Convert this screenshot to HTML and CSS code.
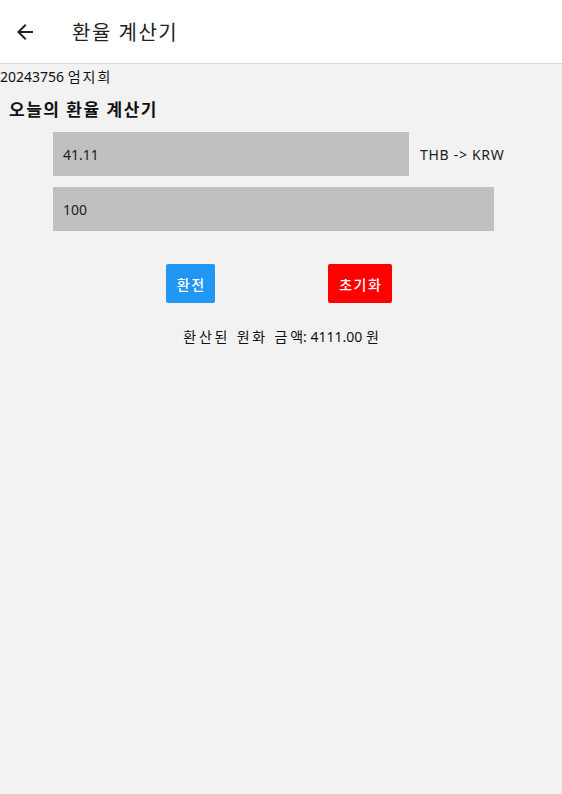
FILE: index.html
```html
<!DOCTYPE html>
<html lang="ko">
<head>
<meta charset="utf-8">
<link rel="stylesheet" href="styles.css">
</head>
<body>
<header class="appbar">
  <svg class="back" width="24" height="24" viewBox="0 0 24 24"><path d="M20 11H7.83l5.59-5.59L12 4l-8 8 8 8 1.41-1.41L7.83 13H20v-2z" fill="#222"/></svg>
  <span class="title">환율 계산기</span>
</header>
<main class="content">
  <div class="student">20243756 <span class="ko">엄지희</span></div>
  <h1 class="heading">오늘의 환율 계산기</h1>
  <div class="row">
    <div class="field field-rate">41.11</div>
    <span class="pair">THB -&gt; KRW</span>
  </div>
  <div class="row">
    <div class="field field-amount">100</div>
  </div>
  <div class="buttons">
    <button class="btn btn-blue">환전</button>
    <button class="btn btn-red">초기화</button>
  </div>
  <p class="result"><span class="ko ko-wide">환산된 원화 금</span>액: 4111.00 <span class="ko">원</span></p>
</main>
</body>
</html>
```
FILE: styles.css
```css
html, body { margin: 0; padding: 0; }
body {
  background: #f2f2f2;
  font-family: "Noto Sans", "Noto Sans CJK KR", sans-serif;
  color: #111;
  width: 562px;
  height: 794px;
  overflow: hidden;
}
.appbar {
  height: 64px;
  background: #fff;
  border-bottom: 1px solid #d8d8d8;
  display: flex;
  align-items: center;
  padding-left: 13px;
  box-sizing: border-box;
}
.back { margin-right: 35px; }
.title { font-size: 20px; color: #222; letter-spacing: 1.5px; }
.content { padding-top: 3px; }
.ko { letter-spacing: 2px; }
.ko-wide { letter-spacing: 2.8px; }
.student { font-size: 14px; margin-left: 0; line-height: 20px; }
.heading {
  font-size: 17px;
  font-weight: bold;
  margin: 12px 0 0 9px;
  line-height: 22px;
  letter-spacing: 1.5px;
}
.row {
  display: flex;
  align-items: center;
  margin-left: 53px;
  margin-top: 11px;
}
.field {
  background: #c0c0c0;
  height: 44px;
  box-sizing: border-box;
  padding-left: 10px;
  display: flex;
  align-items: center;
  font-size: 14px;
  color: #222;
}
.field-rate { width: 356px; }
.field-amount { width: 441px; }
.pair { margin-left: 11px; font-size: 14px; color: #222; letter-spacing: 0.7px; }
.buttons {
  display: flex;
  margin-top: 33px;
  padding-left: 166px;
  gap: 113px;
}
.btn {
  border: none;
  border-radius: 2px;
  color: #fff;
  font-family: inherit;
  font-size: 14px;
  font-weight: 500;
  height: 39px;
  padding: 0;
  letter-spacing: 1.5px;
  text-indent: 1.5px;
}
.btn-blue { background: #2196f3; width: 49px; }
.btn-red { background: #ff0000; width: 64px; }
.result {
  text-align: center;
  font-size: 14px;
  margin: 24px 0 0;
  line-height: 20px;
  padding-left: 2px;
}
```
